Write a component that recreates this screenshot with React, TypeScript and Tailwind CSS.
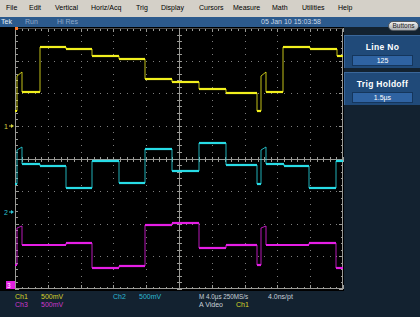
import React from "react";

const L = 15, R = 343, T = 28, B = 289;
const DX = (R - L) / 10, DY = (B - T) / 8;
const CX = L + 5 * DX, CY = T + 4 * DY;

type P = [number, number];

const ch1: P[] = [
  [15, 111], [17, 111], [17, 76], [22, 72], [22, 92], [40, 92], [40, 47], [66, 47], [66, 49], [92, 49],
  [92, 56], [119, 56], [119, 59], [145, 59], [145, 79], [172, 79], [172, 82], [199, 82], [199, 89],
  [226, 89], [226, 93], [257, 93], [257, 111], [261, 111], [261, 76], [266, 72], [266, 92], [283, 92],
  [283, 47], [310, 47], [310, 49], [337, 49], [337, 56], [343, 56],
];
const ch2: P[] = [
  [15, 184], [17, 184], [17, 150], [22, 147], [22, 164], [40, 164], [40, 166], [66, 166], [66, 188],
  [92, 188], [92, 161], [119, 161], [119, 183], [145, 183], [145, 149], [172, 149], [172, 171],
  [199, 171], [199, 143], [226, 143], [226, 165], [257, 165], [257, 184], [261, 184], [261, 150],
  [266, 147], [266, 164], [284, 164], [284, 166], [309, 166], [309, 188], [336, 188], [336, 161], [343, 161],
];
const ch3: P[] = [
  [15, 265], [17, 265], [17, 228], [22, 226], [22, 245], [66, 245], [66, 243], [92, 243], [92, 268],
  [119, 268], [119, 266], [145, 266], [145, 225], [172, 225], [172, 223], [199, 223], [199, 248],
  [226, 248], [226, 245], [257, 245], [257, 265], [261, 265], [261, 228], [266, 226], [266, 245],
  [309, 245], [309, 243], [336, 243], [336, 268], [343, 268],
];

function Trace({ pts, color }: { pts: P[]; color: string }) {
  const d = pts.map((p, i) => (i === 0 ? "M" : "L") + p[0] + "," + p[1]).join(" ");
  const hs: React.ReactNode[] = [];
  for (let i = 1; i < pts.length; i++) {
    if (pts[i][1] === pts[i - 1][1] && pts[i][0] !== pts[i - 1][0]) {
      hs.push(
        <line key={i} x1={pts[i - 1][0]} y1={pts[i][1]} x2={pts[i][0]} y2={pts[i][1]} stroke={color} strokeWidth={2.2} />
      );
    }
  }
  return (
    <g>
      <path d={d} fill="none" stroke={color} strokeWidth={1} opacity={0.8} />
      {hs}
    </g>
  );
}

function Scope() {
  const els: React.ReactNode[] = [];
  const fr = "#9a9a96";
  const dot = "#7e7e7e";
  for (let k = 1; k < 10; k++) {
    if (k === 5) continue;
    const x = Math.round(L + k * DX);
    for (let j = 1; j < 40; j++) {
      const y = Math.round(T + (j * DY) / 5);
      els.push(<rect key={`vd${k}-${j}`} x={x} y={y} width={1} height={1} fill={dot} />);
    }
  }
  for (let m = 1; m < 8; m++) {
    if (m === 4) continue;
    const y = Math.round(T + m * DY);
    for (let i = 1; i < 50; i++) {
      const x = Math.round(L + (i * DX) / 5);
      els.push(<rect key={`hd${m}-${i}`} x={x} y={y} width={1} height={1} fill={dot} />);
    }
  }
  for (let i = 0; i <= 50; i++) {
    const x = Math.round(L + (i * DX) / 5) + 0.5;
    const len = i % 5 === 0 ? 4 : 2.5;
    els.push(<line key={`tt${i}`} x1={x} y1={T} x2={x} y2={T + len} stroke={fr} strokeWidth={1} />);
    els.push(<line key={`bt${i}`} x1={x} y1={B} x2={x} y2={B - len} stroke={fr} strokeWidth={1} />);
    els.push(<line key={`ct${i}`} x1={x} y1={Math.round(CY) - 2} x2={x} y2={Math.round(CY) + 3} stroke={fr} strokeWidth={1} />);
  }
  for (let j = 0; j <= 40; j++) {
    const y = Math.round(T + (j * DY) / 5) + 0.5;
    const len = j % 5 === 0 ? 4 : 2.5;
    els.push(<line key={`lt${j}`} x1={L} y1={y} x2={L + len} y2={y} stroke={fr} strokeWidth={1} />);
    els.push(<line key={`rt${j}`} x1={R} y1={y} x2={R - len} y2={y} stroke={fr} strokeWidth={1} />);
    els.push(<line key={`cvt${j}`} x1={Math.round(CX) - 2} y1={y} x2={Math.round(CX) + 3} y2={y} stroke={fr} strokeWidth={1} />);
  }
  const cx = Math.round(CX) + 0.5;
  const cy = Math.round(CY) + 0.5;
  return (
    <svg width={344} height={264} viewBox="0 27 344 264" className="block" shapeRendering="crispEdges">
      <rect x={0} y={27} width={344} height={264} fill="#000" />
      {els}
      <line x1={L + 0.5} y1={T} x2={L + 0.5} y2={B} stroke={fr} />
      <line x1={R - 0.5} y1={T} x2={R - 0.5} y2={B} stroke={fr} />
      <line x1={L} y1={T + 0.5} x2={R} y2={T + 0.5} stroke="#4a4a4a" />
      <line x1={L} y1={B - 0.5} x2={R} y2={B - 0.5} stroke={fr} />
      <line x1={cx} y1={T} x2={cx} y2={B} stroke={fr} />
      <line x1={L} y1={cy} x2={R} y2={cy} stroke={fr} />
      <g shapeRendering="auto">
        <Trace pts={ch1} color="#f2f01e" />
        <Trace pts={ch2} color="#28dce6" />
        <Trace pts={ch3} color="#e61ee6" />
      </g>
      <rect x={15} y={27} width={3} height={3} fill="#ff7a2a" />
      <g shapeRendering="auto" fontFamily="Liberation Sans, Arial, sans-serif" fontSize={7}>
        <text x={4} y={128.5} fill="#d6d640">1</text>
        <line x1={9} y1={126} x2={12} y2={126} stroke="#d6d640" />
        <polygon points="11,124 14,126 11,128" fill="#d6d640" />
        <text x={4} y={214.5} fill="#2cc4d4">2</text>
        <line x1={9} y1={212} x2={12} y2={212} stroke="#2cc4d4" />
        <polygon points="11,210 14,212 11,214" fill="#2cc4d4" />
        <rect x={6} y={281} width={9} height={8} fill="#e020e0" />
        <text x={7} y={288} fill="#ffffff" fontSize={6.5}>3</text>
      </g>
    </svg>
  );
}

const menu: [string, string][] = [
  ["File", "w-[23px]"],
  ["Edit", "w-[26px]"],
  ["Vertical", "w-[36px]"],
  ["Horiz/Acq", "w-[45px]"],
  ["Trig", "w-[25px]"],
  ["Display", "w-[38px]"],
  ["Cursors", "w-[34px]"],
  ["Measure", "w-[39px]"],
  ["Math", "w-[30px]"],
  ["Utilities", "w-[36px]"],
  ["Help", "w-[30px]"],
];

function ParamBlock({ label, value }: { label: string; value: string }) {
  return (
    <div className="flex flex-col items-center h-[33px] bg-[#204a79] border-t border-l border-[#3a679a] pt-[6px]">
      <div className="text-[8.5px] leading-[10px] font-bold text-white tracking-[0.3px]">{label}</div>
      <div className="mt-[3px] w-[61px] h-[11px] bg-[#2f63a2] border border-[#15365c] flex items-center justify-center text-[7px] leading-[9px] text-white">
        {value}
      </div>
    </div>
  );
}

export default function App() {
  return (
    <div className="relative w-[420px] h-[317px] overflow-hidden bg-[#132230] font-['Liberation_Sans',Arial,sans-serif]">
      <div className="flex items-center h-[17px] bg-[#d4d0c8] pl-[6px] text-[7px] text-black">
        {menu.map(([t, w]) => (
          <div key={t} className={w}>
            {t}
          </div>
        ))}
      </div>
      <div className="flex items-center h-[10px] bg-[#2c5a8d] text-[7px] leading-[10px]">
        <div className="w-[25px] pl-[1px] text-[#e6eef6]">Tek</div>
        <div className="w-[32px] text-[#8fa9c9]">Run</div>
        <div className="w-[204px] text-[#8fa9c9]">Hi Res</div>
        <div className="text-[#c9d8e8]">05 Jan 10 15:03:58</div>
      </div>
      <div className="flex">
        <div className="flex flex-col w-[344px]">
          <Scope />
          <div className="flex flex-col pt-[2px] pl-[15px] text-[7px] leading-[8px]">
            <div className="flex">
              <span className="w-[26px] text-[#d8d828]">Ch1</span>
              <span className="w-[72px] text-[#d8d02c]">500mV</span>
              <span className="w-[26px] text-[#2cb8d0]">Ch2</span>
              <span className="w-[60px] text-[#2cb8d0]">500mV</span>
              <span className="w-[69px] text-[6.3px] text-[#c8d0d8]">M 4.0µs 250MS/s</span>
              <span className="text-[#c8d0d8]">4.0ns/pt</span>
            </div>
            <div className="flex">
              <span className="w-[26px] text-[#cc38cc]">Ch3</span>
              <span className="w-[158px] text-[#cc38cc]">500mV</span>
              <span className="w-[37px] text-[#c8d0d8]">A Video</span>
              <span className="text-[#d8d828]">Ch1</span>
            </div>
          </div>
        </div>
        <div className="flex flex-col w-[76px] pt-[8px] gap-[4px]">
          <ParamBlock label="Line No" value="125" />
          <ParamBlock label="Trig Holdoff" value="1.5µs" />
        </div>
      </div>
      <div className="absolute left-[388px] top-[21px] w-[31px] h-[10px] rounded-full border border-[#505860] bg-gradient-to-b from-[#f0f0f0] to-[#a8acb0] flex items-center justify-center text-[6.5px] leading-[8px] text-[#1a1a1a]">
        Buttons
      </div>
    </div>
  );
}
